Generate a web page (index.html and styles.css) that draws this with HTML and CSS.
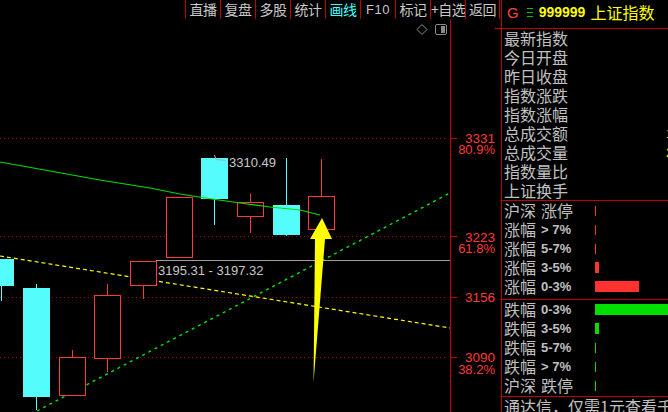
FILE: index.html
```html
<!DOCTYPE html>
<html lang="zh">
<head>
<meta charset="utf-8">
<title>上证指数</title>
<link rel="stylesheet" href="styles.css">
</head>
<body>
<div class="screen">
  <div class="main">
    <div class="toolbar">
      <span class="tab">直播</span>
      <span class="tab">复盘</span>
      <span class="tab">多股</span>
      <span class="tab">统计</span>
      <span class="tab active">画线</span>
      <span class="tab num">F10</span>
      <span class="tab">标记</span>
      <span class="tab">+自选</span>
      <span class="tab">返回</span>
    </div>
    <svg class="chart" width="501" height="392" viewBox="0 20 501 392" xmlns="http://www.w3.org/2000/svg">
      <!-- dotted price levels -->
      <g class="dots">
        <line x1="0" y1="138.5" x2="448" y2="138.5"/>
        <line x1="0" y1="236.5" x2="448" y2="236.5"/>
        <line x1="0" y1="297.5" x2="448" y2="297.5"/>
        <line x1="0" y1="357.5" x2="448" y2="357.5"/>
      </g>
      <!-- axis -->
      <line class="axis" x1="450.5" y1="20" x2="450.5" y2="412"/>
      <line class="axis" x1="495" y1="28.5" x2="501" y2="28.5"/>
      <g class="axis">
        <line x1="450" y1="138.5" x2="457" y2="138.5"/>
        <line x1="450" y1="236.5" x2="457" y2="236.5"/>
        <line x1="450" y1="297.5" x2="457" y2="297.5"/>
        <line x1="450" y1="357.5" x2="457" y2="357.5"/>
      </g>
      <g class="axis-label">
        <text x="495" y="143">3331</text>
        <text x="495" y="154" class="pc">80.9%</text>
        <text x="495" y="242">3223</text>
        <text x="495" y="253" class="pc">61.8%</text>
        <text x="495" y="302">3156</text>
        <text x="495" y="362">3090</text>
        <text x="495" y="374" class="pc">38.2%</text>
      </g>
      <!-- top-right icons -->
      <path class="icon" d="M422 24.5 L427 29.5 L422 34.5 L417 29.5 Z"/>
      <rect class="icon" x="435.5" y="24.5" width="11" height="10" rx="1.5"/>
      <rect class="icon-fill" x="441" y="26" width="4" height="7"/>

      <!-- yellow dashed trend -->
      <line class="ydash" x1="0" y1="256" x2="450" y2="328"/>
      <!-- green dotted trend -->
      <line class="gdash" x1="37" y1="411" x2="450" y2="193"/>

      <!-- candles down (cyan) -->
      <g class="down">
        <line x1="1.5" y1="285" x2="1.5" y2="301"/>
        <rect x="0" y="259" width="14" height="27"/>
        <line x1="36.5" y1="284" x2="36.5" y2="410"/>
        <rect x="23" y="288" width="27" height="109"/>
        <line x1="214.5" y1="198" x2="214.5" y2="225"/>
        <rect x="201" y="158" width="27" height="41"/>
        <line x1="286.5" y1="158" x2="286.5" y2="236"/>
        <rect x="273" y="205" width="27" height="30"/>
      </g>
      <!-- candles up (red hollow) -->
      <g class="up">
        <line x1="72.5" y1="350" x2="72.5" y2="357"/>
        <rect x="59.5" y="357.5" width="26" height="38"/>
        <line x1="107.5" y1="284" x2="107.5" y2="295"/>
        <line x1="107.5" y1="359" x2="107.5" y2="372"/>
        <rect x="94.5" y="295.5" width="26" height="63"/>
        <line x1="143.5" y1="286" x2="143.5" y2="299"/>
        <rect x="130.5" y="261.5" width="26" height="24"/>
        <rect x="166.5" y="197.5" width="26" height="60"/>
        <line x1="250.5" y1="194" x2="250.5" y2="202"/>
        <line x1="250.5" y1="217" x2="250.5" y2="233"/>
        <rect x="237.5" y="202.5" width="26" height="14"/>
        <line x1="321.5" y1="159" x2="321.5" y2="196"/>
        <rect x="308.5" y="196.5" width="26" height="33"/>
      </g>

      <!-- moving average -->
      <polyline class="ma" points="0,162 50,171 100,180 150,188 180,194 212,199 240,203 270,207 300,210 320,215"/>

      <!-- range line -->
      <line class="range" x1="156" y1="260.5" x2="450" y2="260.5"/>
      <text class="note" x="158" y="275">3195.31 - 3197.32</text>

      <!-- high marker -->
      <path class="leader" d="M214.5 155 L216 159.5 L226 160.5"/>
      <text class="note" x="229" y="167">3310.49</text>

      <!-- arrow -->
      <polygon class="arrow" points="322,218 332,239 325,239 313.5,383 315,239 310,239"/>
    </svg>
  </div>

  <aside class="panel">
    <div class="head">
      <span class="g">G</span>
      <svg class="menu" width="6" height="9" viewBox="0 0 6 9"><rect x="0" y="0" width="6" height="1"/><rect x="0" y="4" width="6" height="1"/><rect x="0" y="8" width="6" height="1"/></svg>
      <span class="code">999999</span>
      <span class="name">上证指数</span>
    </div>
    <div class="info">
      <div class="row">最新指数</div>
      <div class="row">今日开盘</div>
      <div class="row">昨日收盘</div>
      <div class="row">指数涨跌</div>
      <div class="row">指数涨幅</div>
      <div class="row">总成交额<span class="val">1</span></div>
      <div class="row">总成交量<span class="val">2</span></div>
      <div class="row">指数量比</div>
      <div class="row">上证换手</div>
    </div>
    <div class="stats">
      <div class="row"><span class="lbl">沪深<span>涨停</span></span><span class="bar red thin"></span></div>
      <div class="row"><span class="lbl">涨幅<span class="pct">&gt; 7%</span></span><span class="bar red thin"></span></div>
      <div class="row"><span class="lbl">涨幅<span class="pct">5-7%</span></span><span class="bar red thin"></span></div>
      <div class="row"><span class="lbl">涨幅<span class="pct">3-5%</span></span><span class="bar red" style="width:4px"></span></div>
      <div class="row"><span class="lbl">涨幅<span class="pct">0-3%</span></span><span class="bar red" style="width:44px"></span></div>
    </div>
    <div class="stats last">
      <div class="row"><span class="lbl">跌幅<span class="pct">0-3%</span></span><span class="bar green" style="width:73px"></span></div>
      <div class="row"><span class="lbl">跌幅<span class="pct">3-5%</span></span><span class="bar green" style="width:4px"></span></div>
      <div class="row"><span class="lbl">跌幅<span class="pct">5-7%</span></span><span class="bar green thin"></span></div>
      <div class="row"><span class="lbl">跌幅<span class="pct">&gt; 7%</span></span><span class="bar green thin"></span></div>
      <div class="row"><span class="lbl">沪深<span>跌停</span></span><span class="bar green thin"></span></div>
    </div>
    <div class="ad">通达信，仅需1元查看千档盘口</div>
  </aside>
</div>
</body>
</html>
```

FILE: styles.css
```css
* {
  box-sizing: border-box;
  margin: 0;
  padding: 0;
}

html, body {
  background: #000;
}

body {
  width: 668px;
  height: 412px;
  overflow: hidden;
  font-family: "Noto Sans CJK SC", "Liberation Sans", sans-serif;
  color: #c0c0c0;
}

.screen {
  display: flex;
  width: 668px;
  height: 412px;
}

.main {
  width: 501px;
  display: flex;
  flex-direction: column;
}

.toolbar {
  height: 20px;
  display: flex;
  padding-left: 185px;
}

.tab {
  width: 35px;
  height: 19px;
  border-left: 1px solid #c00000;
  font-size: 14px;
  line-height: 19px;
  text-align: center;
  color: #c8c8c8;
  white-space: nowrap;
  letter-spacing: -0.5px;
}

.tab:last-child {
  border-right: 1px solid #c00000;
}

.tab.num {
  font-family: "Liberation Sans", sans-serif;
  font-size: 13px;
  letter-spacing: 0.5px;
}

.tab.active {
  color: #40ffff;
}

.chart {
  display: block;
}

.dots line {
  stroke: #a00000;
  stroke-width: 1;
  stroke-dasharray: 1 3;
}

.axis, .axis line {
  stroke: #c80000;
  stroke-width: 1;
}

.axis-label text {
  font-family: "Liberation Sans", sans-serif;
  font-size: 13.5px;
  fill: #ff3838;
  text-anchor: end;
}

.axis-label .pc {
  font-size: 13px;
}

.icon {
  fill: none;
  stroke: #8a8a8a;
  stroke-width: 1;
}

.icon-fill {
  fill: #8a8a8a;
}

.ydash {
  stroke: #ffff00;
  stroke-width: 1.2;
  stroke-dasharray: 4 3;
}

.gdash {
  stroke: #00e800;
  stroke-width: 1.4;
  stroke-dasharray: 3 4;
}

.down line {
  stroke: #54fcfc;
  stroke-width: 1;
}

.down rect {
  fill: #54fcfc;
}

.up line {
  stroke: #ff3838;
  stroke-width: 1;
}

.up rect {
  fill: #000;
  stroke: #ff3838;
  stroke-width: 1;
}

.ma {
  fill: none;
  stroke: #00e000;
  stroke-width: 1.2;
}

.range {
  stroke: #a0a0a0;
  stroke-width: 1;
}

.note {
  font-family: "Liberation Sans", sans-serif;
  font-size: 13px;
  fill: #c8c8c8;
}

.leader {
  fill: none;
  stroke: #b0b0b0;
  stroke-width: 1;
}

.arrow {
  fill: #ffff00;
}

.panel {
  width: 167px;
  border-left: 1px solid #c00000;
  display: flex;
  flex-direction: column;
  overflow: hidden;
}

.head {
  height: 29px;
  border-bottom: 1px solid #c00000;
  display: flex;
  align-items: center;
  padding-bottom: 4px;
  white-space: nowrap;
}

.g {
  margin-left: 5px;
  font-family: "Liberation Sans", sans-serif;
  font-size: 15px;
  color: #ff4040;
}

.menu {
  margin-left: 8px;
  fill: #00c000;
}

.code {
  margin-left: 6px;
  font-family: "Liberation Sans", sans-serif;
  font-weight: bold;
  font-size: 14px;
  color: #ffff00;
}

.name {
  margin-left: 5px;
  font-size: 16px;
  color: #ffff00;
}

.info {
  height: 172px;
  border-bottom: 1px solid #c00000;
}

.row {
  height: 19px;
  display: flex;
  align-items: center;
  padding-left: 2px;
  font-size: 16px;
  line-height: 19px;
  white-space: nowrap;
}

.val {
  margin-left: auto;
  width: 2px;
  overflow: hidden;
  color: #ffff00;
  font-family: "Liberation Sans", sans-serif;
  font-size: 13px;
}

.stats {
  padding-bottom: 3px;
  border-bottom: 1px solid #c00000;
}

.stats.last {
  padding-bottom: 1px;
}

.lbl {
  width: 91px;
  display: flex;
  align-items: center;
  gap: 5px;
  flex-shrink: 0;
}

.pct {
  font-family: "Liberation Sans", sans-serif;
  font-weight: bold;
  font-size: 13px;
}

.bar {
  height: 11px;
  flex-shrink: 0;
}

.bar.thin {
  width: 1px;
  height: 10px;
}

.bar.red {
  background: #ff3232;
}

.bar.green {
  background: #00e000;
}

.ad {
  padding-left: 2px;
  font-size: 16px;
  line-height: 19px;
  white-space: nowrap;
  overflow: hidden;
}
```
